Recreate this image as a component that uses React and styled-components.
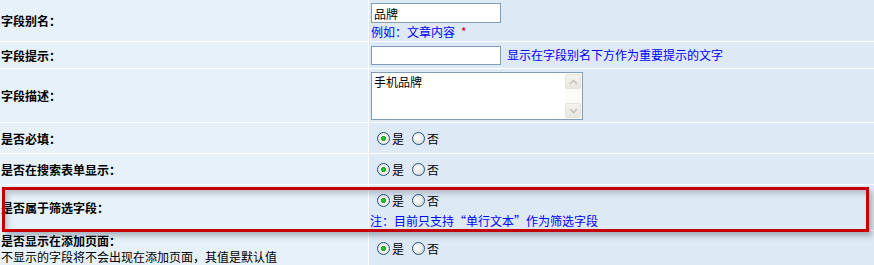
import React from "react";
import styled, { createGlobalStyle } from "styled-components";

const Global = createGlobalStyle`
  html, body { margin: 0; padding: 0; background: #dde9f5; }
  body { font-family: "Noto Sans CJK SC", "Noto Sans", sans-serif; font-size: 12px; color: #000; }
`;

const Wrap = styled.div`
  position: relative;
  width: 874px;
`;

const Table = styled.div`
  display: flex;
  flex-direction: column;
  gap: 1px;
  background: #ffffff;
`;

const Row = styled.div`
  display: grid;
  grid-template-columns: 368px 1fr;
  column-gap: 1px;
  height: ${(p) => p.$h}px;
`;

const Label = styled.div`
  background: #e6f1f9;
  display: flex;
  flex-direction: column;
  justify-content: center;
  padding-left: 1px;
  font-weight: bold;
  line-height: 17px;
`;

const SubLabel = styled.span`
  font-weight: normal;
  line-height: 17px;
  margin-top: -1px;
`;

const Value = styled.div`
  background: #dde9f5;
  display: flex;
  flex-direction: ${(p) => (p.$column ? "column" : "row")};
  justify-content: flex-start;
  align-items: ${(p) => (p.$column ? "flex-start" : "center")};
  padding-left: 2px;
  padding-top: ${(p) => p.$pt || 0}px;
  box-sizing: border-box;
`;

const TextInput = styled.input`
  box-sizing: border-box;
  width: 130px;
  height: ${(p) => p.$h || 20}px;
  border: 1px solid #7f9db9;
  background: #fff;
  padding: 0 2px;
  margin: 0;
  font-family: inherit;
  font-size: 12px;
  color: #000;
  outline: none;
`;

const Hint = styled.span`
  color: #0000ff;
  line-height: 18px;
  margin-left: ${(p) => p.$ml || 0}px;
  white-space: nowrap;
`;

const Star = styled.span`
  color: #e00000;
  margin-left: 6px;
`;

const AreaBox = styled.div`
  box-sizing: border-box;
  width: 212px;
  height: 48px;
  border: 1px solid #7f9db9;
  background: #fff;
  display: flex;
`;

const AreaText = styled.div`
  flex: 1;
  padding: 1px 2px;
  line-height: 16px;
`;

const ScrollBar = styled.div`
  width: 16px;
  background: #fbfbf7;
  display: flex;
  flex-direction: column;
  justify-content: space-between;
  padding: 1px 1px 1px 0;
`;

const ScrollBtn = styled.div`
  height: 15px;
  box-sizing: border-box;
  border: 1px solid #e4e3dc;
  border-radius: 2px;
  background: linear-gradient(#f4f3ee, #e7e6df);
  display: flex;
  align-items: center;
  justify-content: center;
`;

const Radios = styled.div`
  display: flex;
  align-items: center;
  height: 24px;
`;

const Radio = styled.span`
  box-sizing: border-box;
  width: 13px;
  height: 13px;
  border-radius: 50%;
  border: 1px solid #1f5283;
  margin: 0 2px 0 ${(p) => (p.$first ? 6 : 8)}px;
  background: ${(p) =>
    p.$checked
      ? "radial-gradient(circle at 50% 50%, #3fcf3f 0, #1fa01f 2.2px, #f4f4f0 2.8px, #dcdcd4 100%)"
      : "radial-gradient(circle at 40% 40%, #ffffff 0, #f0f0ea 40%, #d2d2cb 100%)"};
`;

const Note = styled.span`
  color: #0000ff;
  line-height: 18px;
  margin-left: -1px;
  white-space: nowrap;
`;

const Highlight = styled.div`
  position: absolute;
  left: 2px;
  top: 187px;
  width: 867px;
  height: 45px;
  box-sizing: border-box;
  border: 3px solid #c40000;
  box-shadow: 3px 4px 5px rgba(60, 70, 80, 0.35), inset 3px 4px 5px rgba(60, 70, 80, 0.25);
  pointer-events: none;
`;

const Chevron = ({ up }) => (
  <svg width="9" height="6" viewBox="0 0 9 6">
    <path
      d={up ? "M1 5 L4.5 1.5 L8 5" : "M1 1 L4.5 4.5 L8 1"}
      fill="none"
      stroke="#c3c3bd"
      strokeWidth="1.6"
    />
  </svg>
);

const YesNo = () => (
  <Radios>
    <Radio $first $checked />
    <span>是</span>
    <Radio />
    <span>否</span>
  </Radios>
);

export default function App() {
  return (
    <>
      <Global />
      <Wrap>
        <Table>
          <Row $h={41}>
            <Label>字段别名：</Label>
            <Value $column $pt={3}>
              <TextInput defaultValue="品牌" />
              <Hint>
                例如：文章内容<Star>*</Star>
              </Hint>
            </Value>
          </Row>
          <Row $h={26}>
            <Label>字段提示：</Label>
            <Value>
              <TextInput $h={19} />
              <Hint $ml={6}>显示在字段别名下方作为重要提示的文字</Hint>
            </Value>
          </Row>
          <Row $h={53}>
            <Label>字段描述：</Label>
            <Value $column $pt={3}>
              <AreaBox>
                <AreaText>手机品牌</AreaText>
                <ScrollBar>
                  <ScrollBtn>
                    <Chevron up />
                  </ScrollBtn>
                  <ScrollBtn>
                    <Chevron />
                  </ScrollBtn>
                </ScrollBar>
              </AreaBox>
            </Value>
          </Row>
          <Row $h={30}>
            <Label>是否必填：</Label>
            <Value>
              <YesNo />
            </Value>
          </Row>
          <Row $h={30}>
            <Label>是否在搜索表单显示：</Label>
            <Value>
              <YesNo />
            </Value>
          </Row>
          <Row $h={45}>
            <Label>是否属于筛选字段：</Label>
            <Value $column $pt={3}>
              <YesNo />
              <Note>注：目前只支持“单行文本”作为筛选字段</Note>
            </Value>
          </Row>
          <Row $h={34}>
            <Label>
              <span>是否显示在添加页面：</span>
              <SubLabel>不显示的字段将不会出现在添加页面，其值是默认值</SubLabel>
            </Label>
            <Value>
              <YesNo />
            </Value>
          </Row>
        </Table>
        <Highlight />
      </Wrap>
    </>
  );
}
